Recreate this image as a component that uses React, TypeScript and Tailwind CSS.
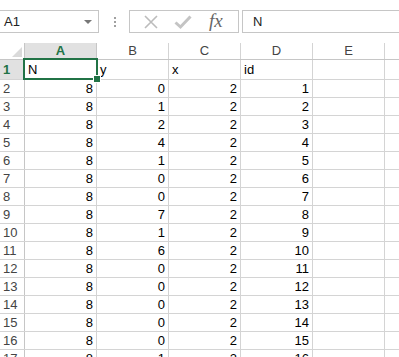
const data: number[][] = [
  [8, 0, 2, 1],
  [8, 1, 2, 2],
  [8, 2, 2, 3],
  [8, 4, 2, 4],
  [8, 1, 2, 5],
  [8, 0, 2, 6],
  [8, 0, 2, 7],
  [8, 7, 2, 8],
  [8, 1, 2, 9],
  [8, 6, 2, 10],
  [8, 0, 2, 11],
  [8, 0, 2, 12],
  [8, 0, 2, 13],
  [8, 0, 2, 14],
  [8, 0, 2, 15],
  [8, 1, 2, 16],
];

const columns = ["A", "B", "C", "D", "E"];
const headings = ["N", "y", "x", "id", ""];

const FormulaBar = () => (
  <div className="flex h-[23px] mt-[10px] text-[13px] text-[#222]">
    <div className="relative -ml-px w-[100px] shrink-0 border border-[#c6c6c6] flex items-center pl-[4px]">
      <span>A1</span>
      <div className="absolute right-[6px] top-[9px] w-0 h-0 border-l-[4px] border-r-[4px] border-t-[4px] border-l-transparent border-r-transparent border-t-[#777]" />
    </div>
    <div className="w-[30px] shrink-0 flex flex-col items-center justify-center gap-[2px] pl-[2px]">
      <div className="w-[2px] h-[2px] bg-[#a0a0a0]" />
      <div className="w-[2px] h-[2px] bg-[#a0a0a0]" />
      <div className="w-[2px] h-[2px] bg-[#a0a0a0]" />
    </div>
    <div className="w-[110px] shrink-0 border border-[#c6c6c6] flex items-center">
      <svg width="16" height="16" viewBox="0 0 16 16" className="ml-[13px]">
        <path d="M2 2 L14 14 M14 2 L2 14" stroke="#bcbcbc" strokeWidth="1.6" fill="none" />
      </svg>
      <svg width="18" height="16" viewBox="0 0 18 16" className="ml-[15px]">
        <path d="M1.5 8.5 L6.5 13 L16.5 2.5" stroke="#c4c4c4" strokeWidth="3" fill="none" />
      </svg>
      <span className="ml-[17px] text-[19px] leading-none italic text-[#666] font-['Liberation_Serif',serif] -mt-[2px]">
        fx
      </span>
    </div>
    <div className="ml-[3px] flex-1 -mr-px border border-[#c6c6c6] flex items-center pl-[10px]">
      N
    </div>
  </div>
);

const HeaderRow = () => (
  <div className="flex h-[17px] mt-[10px] border-b border-[#c6c6c6]">
    <div className="relative w-[25px] shrink-0 border-r border-[#c6c6c6]">
      <div className="absolute right-[2px] bottom-[2px] w-0 h-0 border-l-[10px] border-t-[10px] border-l-transparent border-t-transparent border-b-0 border-r-[10px] border-r-[#dadada] -mr-[0px]" style={{ borderBottomWidth: 0 }} />
    </div>
    {columns.map((c, i) => (
      <div
        key={c}
        className={
          i === 0
            ? "w-[72px] shrink-0 flex items-center justify-center bg-[#e1e1e1] text-[#217346] font-bold border-r border-[#c6c6c6] -mb-px border-b-2 border-b-[#217346]"
            : "w-[72px] shrink-0 flex items-center justify-center text-[#444] border-r border-[#d4d4d4]"
        }
      >
        {c}
      </div>
    ))}
    <div className="w-[72px] shrink-0" />
  </div>
);

const Row = ({ n, values }: { n: number; values: number[] }) => (
  <div className="flex h-[18px] border-b border-[#d4d4d4]">
    <div className="w-[25px] shrink-0 border-r border-[#c6c6c6] flex items-center pl-[3px] text-[#444]">
      {n}
    </div>
    {values.map((v, i) => (
      <div key={i} className="w-[72px] shrink-0 border-r border-[#d4d4d4] flex items-center justify-end pr-[3px]">
        {v}
      </div>
    ))}
    <div className="w-[72px] shrink-0 border-r border-[#d4d4d4]" />
    <div className="w-[72px] shrink-0" />
  </div>
);

export default function App() {
  return (
    <div className="w-[399px] h-[357px] overflow-hidden bg-white text-[13px] text-black font-['Liberation_Sans',Arial,sans-serif]">
      <FormulaBar />
      <HeaderRow />
      <div className="flex h-[20px] border-b border-[#d4d4d4]">
        <div className="w-[25px] shrink-0 bg-[#e1e1e1] border-r border-[#c6c6c6] flex items-center pl-[3px] text-[#217346] font-bold">
          1
        </div>
        {headings.map((h, i) => (
          <div key={i} className="relative w-[72px] shrink-0 border-r border-[#d4d4d4] flex items-center pl-[3px]">
            {h}
            {i === 0 && (
              <div className="absolute -left-[2px] -top-[2px] -right-[2px] -bottom-[1px] border-2 border-[#217346] z-10">
                <div className="absolute -right-[4px] -bottom-[4px] w-[6px] h-[6px] bg-[#217346] outline outline-1 outline-white" />
              </div>
            )}
          </div>
        ))}
        <div className="w-[72px] shrink-0" />
      </div>
      {data.map((values, i) => (
        <Row key={i} n={i + 2} values={values} />
      ))}
    </div>
  );
}
